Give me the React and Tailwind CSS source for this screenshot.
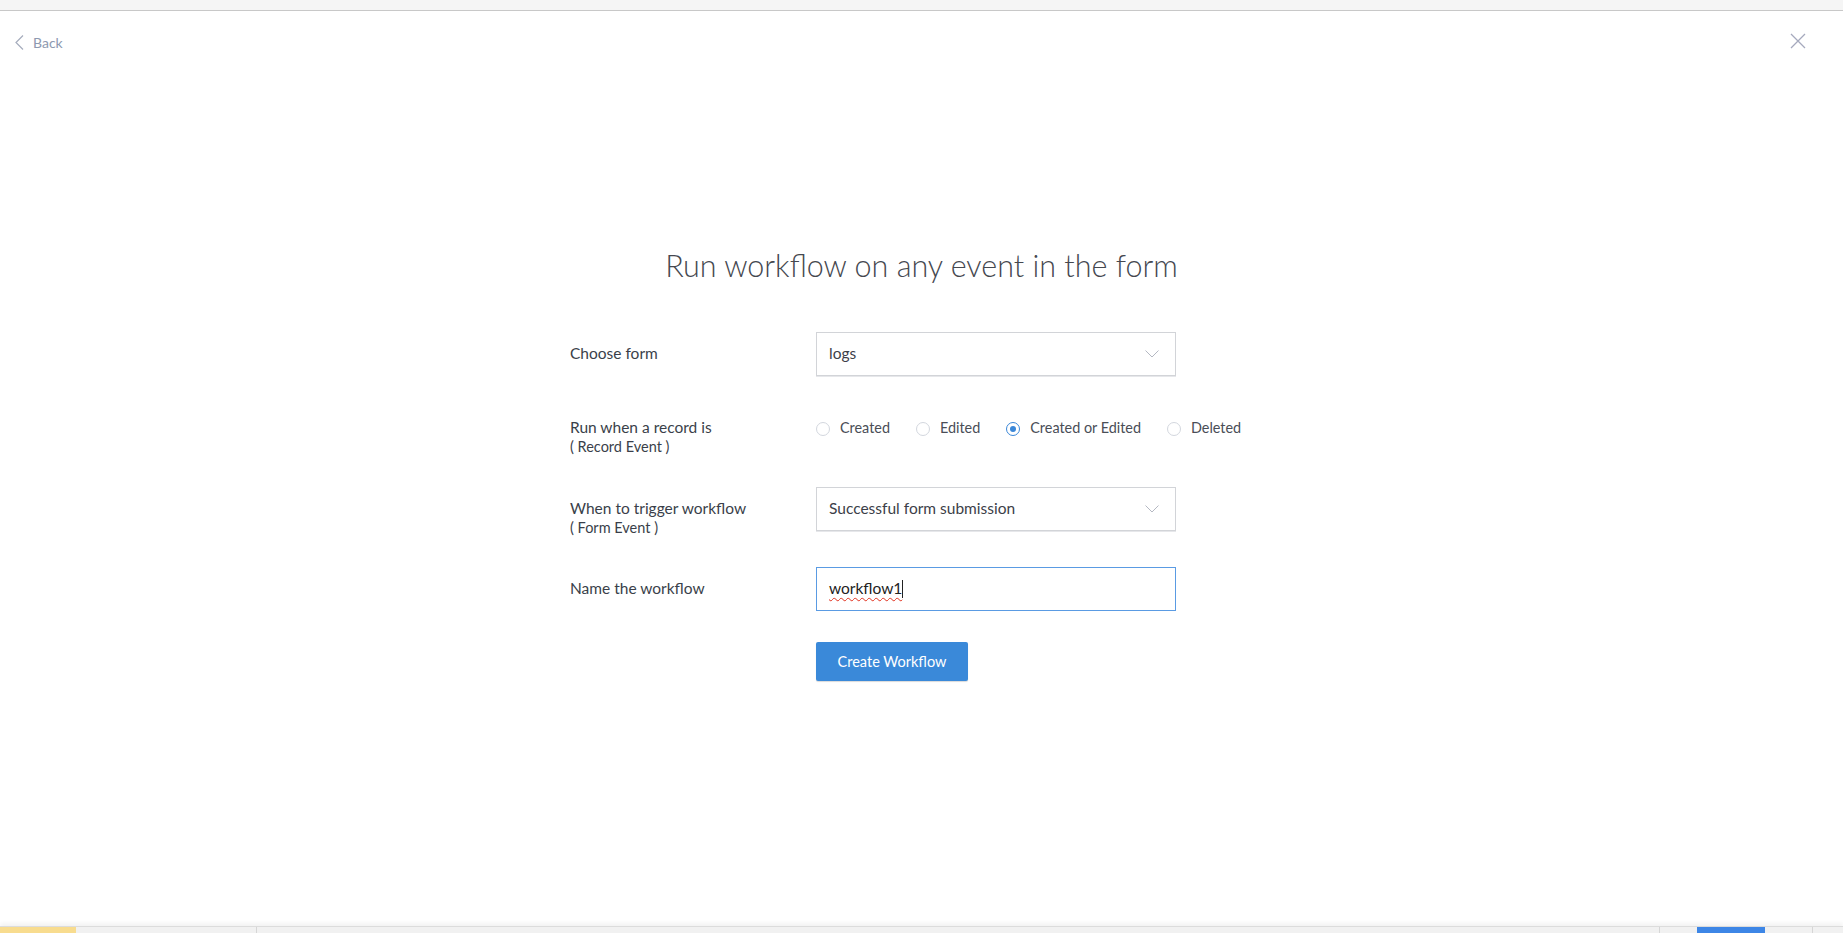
import React from 'react';

function Chevron() {
  return (
    <svg width="14" height="8" viewBox="0 0 14 8" fill="none" className="shrink-0">
      <path d="M0.5 0.5 L7 7 L13.5 0.5" stroke="#b4b8c2" strokeWidth="1" />
    </svg>
  );
}

function SelectBox({ value }) {
  return (
    <div className="w-[360px] h-[44px] border border-[#d2d4d8] bg-white flex items-center justify-between pl-[12px] pr-[16px] shadow-[0_1px_0_#e6e7ea]">
      <span className="text-[15.5px] text-[#3c4048]">{value}</span>
      <Chevron />
    </div>
  );
}

function Radio({ label, checked }) {
  return (
    <div className="flex items-center gap-[10px]">
      <span
        className={
          checked
            ? 'mt-[3px] w-[14px] h-[14px] rounded-full border border-[#3a87d8] flex items-center justify-center'
            : 'mt-[3px] w-[14px] h-[14px] rounded-full border border-[#d3d7de]'
        }
      >
        {checked && <span className="w-[6px] h-[6px] rounded-full bg-[#3a87d8]" />}
      </span>
      <span className="text-[14.4px] text-[#4a4e57]">{label}</span>
    </div>
  );
}

export default function App() {
  return (
    <div className="h-[933px] flex flex-col bg-white font-['Lato','Open_Sans',sans-serif] overflow-hidden">
      {/* browser strip */}
      <div className="h-[11px] bg-[#f5f5f5] border-b border-[#c8c8c8] shrink-0" />

      <div className="flex-1 flex flex-col">
        {/* Header */}
        <div className="flex items-start justify-between pl-[15px] pr-[37px] pt-[22px]">
          <div className="flex items-center gap-[9px] h-[18px]">
            <svg width="9" height="15" viewBox="0 0 9 15" fill="none">
              <path d="M8 0.5 L1 7.5 L8 14.5" stroke="#a6adbd" strokeWidth="1.2" />
            </svg>
            <span className="text-[14px] text-[#8d99b0]">Back</span>
          </div>
          <svg width="16" height="16" viewBox="0 0 16 16" fill="none">
            <path d="M1 1 L15 15 M15 1 L1 15" stroke="#a5a9bd" strokeWidth="1.3" />
          </svg>
        </div>

        {/* Content */}
        <div className="pt-[196px]">
          <h1 className="text-center text-[30.5px] leading-[36px] font-light text-[#45484f]">
            Run workflow on any event in the form
          </h1>

          <div className="w-[703px] mx-auto mt-[49px]">
            {/* Choose form */}
            <div className="flex items-start h-[44px]">
              <div className="w-[246px] pt-[12px] text-[15.5px] leading-[19px] text-[#3a3f4a]">Choose form</div>
              <SelectBox value="logs" />
            </div>

            {/* Record event */}
            <div className="flex items-start mt-[42px] h-[38px]">
              <div className="w-[246px] text-[15.5px] leading-[19px] text-[#3a3f4a]">
                <div>Run when a record is</div>
                <div className="text-[14.5px]">( Record Event )</div>
              </div>
              <div className="flex items-start gap-[26px] h-[19px] leading-[19px]">
                <Radio label="Created" />
                <Radio label="Edited" />
                <Radio label="Created or Edited" checked />
                <Radio label="Deleted" />
              </div>
            </div>

            {/* Form event */}
            <div className="flex items-start mt-[31px] h-[44px]">
              <div className="w-[246px] pt-[12px] text-[15.5px] leading-[19px] text-[#3a3f4a]">
                <div>When to trigger workflow</div>
                <div className="text-[14.5px]">( Form Event )</div>
              </div>
              <SelectBox value="Successful form submission" />
            </div>

            {/* Name */}
            <div className="flex items-start mt-[36px] h-[44px]">
              <div className="w-[246px] pt-[12px] text-[15.5px] leading-[19px] text-[#3a3f4a]">Name the workflow</div>
              <div className="w-[360px] h-[44px] border border-[#5a9be3] bg-white flex items-center pl-[12px]">
                <span className="text-[15.5px] text-[#222] underline decoration-wavy decoration-[#e0301e] decoration-1 underline-offset-[3px]">
                  workflow1
                </span>
                <span className="w-px h-[18px] bg-[#222]" />
              </div>
            </div>

            {/* Button */}
            <div className="mt-[31px] ml-[246px]">
              <button className="h-[39px] w-[152px] bg-[#3a89d9] text-white text-[14.5px] rounded-[2px] shadow-[0_1px_1px_rgba(0,0,0,0.15)]">
                Create Workflow
              </button>
            </div>
          </div>
        </div>
      </div>

      {/* bottom strip */}
      <div className="h-[7px] shrink-0 flex bg-[#f1f1f1] border-t border-[#dcdcdc] shadow-[0_-3px_4px_rgba(0,0,0,0.05)]">
        <div className="w-[76px] bg-[#f8dc8f]" />
        <div className="w-[181px] border-r border-[#d6d6d6]" />
        <div className="flex-1 border-r border-[#d6d6d6]" />
        <div className="w-[37px]" />
        <div className="w-[68px] bg-[#3d86e6]" />
        <div className="w-[48px] border-r border-[#d6d6d6]" />
        <div className="w-[30px]" />
      </div>
    </div>
  );
}
